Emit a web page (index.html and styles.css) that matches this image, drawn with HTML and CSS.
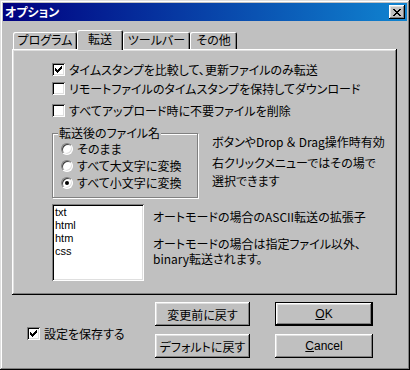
FILE: index.html
```html
<!DOCTYPE html>
<html lang="ja">
<head>
  <meta charset="UTF-8" />
  <title>オプション</title>
  <link rel="stylesheet" href="styles.css">
</head>
<body>
  <div class="window">
    <div class="titlebar">
      <span class="title">オプション</span>
      <span class="close-btn">
        <svg width="8" height="7" viewBox="0 0 8 7"><path d="M0 0h2v1h-2zM1 1h2v1h-2zM2 2h4v1h-4zM3 3h2v1h-2zM2 4h4v1h-4zM1 5h2v1h-2zM0 6h2v1h-2zM6 0h2v1h-2zM5 1h2v1h-2zM5 5h2v1h-2zM6 6h2v1h-2z" fill="#000"/></svg>
      </span>
    </div>

    <div class="dialog">
      <div class="tabs">
        <div class="tab tab-program">プログラム</div>
        <div class="tab tab-transfer active">転送</div>
        <div class="tab tab-toolbar">ツールバー</div>
        <div class="tab tab-other">その他</div>
      </div>

      <div class="panel">
        <label class="check-row row-1"><span class="checkbox checked"></span>タイムスタンプを比較して、更新ファイルのみ転送</label>
        <label class="check-row row-2"><span class="checkbox"></span>リモートファイルのタイムスタンプを保持してダウンロード</label>
        <label class="check-row row-3"><span class="checkbox"></span>すべてアップロード時に不要ファイルを削除</label>

        <div class="name-section">
          <fieldset class="groupbox">
            <legend>転送後のファイル名</legend>
            <div class="radio-row"><span class="radio"></span>そのまま</div>
            <div class="radio-row"><span class="radio"></span>すべて大文字に変換</div>
            <div class="radio-row"><span class="radio selected"></span>すべて小文字に変換</div>
          </fieldset>
          <div class="note">
            <p class="note-1">ボタンやDrop ＆ Drag操作時有効</p>
            <p class="note-2">右クリックメニューではその場で<br>選択できます</p>
          </div>
        </div>

        <div class="ascii-section">
          <div class="listbox">
            <div>txt</div>
            <div>html</div>
            <div>htm</div>
            <div>css</div>
          </div>
          <div class="ascii-note">
            <p class="ascii-1">オートモードの場合のASCII転送の拡張子</p>
            <p class="ascii-2">オートモードの場合は指定ファイル以外、<br>binary転送されます。</p>
          </div>
        </div>
      </div>

      <div class="footer">
        <label class="save-row"><span class="checkbox checked"></span>設定を保存する</label>
        <button class="btn">変更前に戻す</button>
        <button class="btn default"><u>O</u>K</button>
        <button class="btn">デフォルトに戻す</button>
        <button class="btn"><u>C</u>ancel</button>
      </div>
    </div>
  </div>
</body>
</html>
```

FILE: styles.css
```css
body {
  margin: 0;
  background: #c0c0c0;
  font-family: "Noto Sans CJK JP", sans-serif;
  font-size: 12px;
  color: #000;
}
.window {
  width: 410px;
  height: 370px;
  box-sizing: border-box;
  padding: 3px;
  background: #c0c0c0;
  box-shadow: inset -1px -1px #000, inset 1px 1px #dfdfdf, inset -2px -2px #808080, inset 2px 2px #fff;
}

/* title bar */
.titlebar {
  height: 18px;
  display: flex;
  align-items: center;
  justify-content: space-between;
  padding: 0 2px 0 2px;
  background: linear-gradient(to right, #000080, #1084d0);
}
.title {
  color: #fff;
  font-weight: bold;
  font-size: 12px;
  line-height: 18px;
  font-feature-settings: "palt";
}
.close-btn {
  width: 16px;
  height: 14px;
  display: flex;
  align-items: center;
  justify-content: center;
  background: #c0c0c0;
  box-shadow: inset -1px -1px #000, inset 1px 1px #fff, inset -2px -2px #808080, inset 2px 2px #dfdfdf;
}

/* tabs */
.dialog {
  padding: 9px 0 0 9px;
}
.tabs {
  display: flex;
  align-items: flex-end;
  height: 19px;
  padding-left: 1px;
}
.tab {
  height: 17px;
  box-sizing: border-box;
  line-height: 16px;
  text-align: center;
  border-radius: 2px 2px 0 0;
  box-shadow: inset 1px 1px #fff, inset -1px 0 #000, inset -2px 0 #808080;
  font-feature-settings: "palt";
}
.tab-program { width: 64px; }
.tab-transfer { width: 46px; }
.tab-toolbar { width: 67px; }
.tab-other { width: 47px; }
.tab.active {
  height: 20px;
  line-height: 18px;
  position: relative;
  z-index: 1;
  margin-bottom: -1px;
  background: #c0c0c0;
}

.panel {
  width: 385px;
  height: 246px;
  box-sizing: border-box;
  padding: 14px 0 0 40px;
  box-shadow: inset -1px -1px #000, inset 1px 1px #fff, inset -2px -2px #808080, inset 2px 2px #dfdfdf;
  font-feature-settings: "palt";
}

/* checkboxes */
.check-row {
  display: flex;
  align-items: center;
  height: 13px;
  line-height: 13px;
}
.row-2 { margin-top: 6px; }
.row-3 { margin-top: 9px; }
.checkbox {
  width: 13px;
  height: 13px;
  box-sizing: border-box;
  flex: none;
  margin-right: 4px;
  background: #fff;
  box-shadow: inset 1px 1px #808080, inset -1px -1px #fff, inset 2px 2px #000, inset -2px -2px #dfdfdf;
}
.checkbox.checked {
  background: #fff url("data:image/svg+xml;utf8,<svg xmlns='http://www.w3.org/2000/svg' width='13' height='13'><path d='M3 5h1v3h-1zM4 6h1v3h-1zM5 7h1v3h-1zM6 6h1v3h-1zM7 5h1v3h-1zM8 4h1v3h-1zM9 3h1v3h-1z' fill='black'/></svg>") no-repeat;
}

/* file name group */
.name-section {
  display: flex;
  margin-top: 9px;
}
.groupbox {
  width: 146px;
  height: 72px;
  box-sizing: border-box;
  margin: 0;
  padding: 0 0 0 8px;
  border: 1px solid #808080;
  box-shadow: inset 1px 1px #fff, 1px 1px #fff;
}
.groupbox legend {
  margin-left: -3px;
  padding: 0 1px;
  line-height: 14px;
  background: #c0c0c0;
}
.radio-row {
  display: flex;
  align-items: center;
  height: 17px;
}
.radio {
  width: 12px;
  height: 12px;
  box-sizing: border-box;
  flex: none;
  margin-right: 4px;
  border-radius: 50%;
  border: 1px solid;
  border-color: #808080 #fff #fff #808080;
  background: #fff;
  box-shadow: inset 1px 1px #404040, inset -1px -1px #dfdfdf;
  display: flex;
  align-items: center;
  justify-content: center;
}
.radio.selected::after {
  content: "";
  width: 4px;
  height: 4px;
  border-radius: 50%;
  background: #000;
}
.note {
  margin: 7px 0 0 14px;
}
.note p {
  margin: 0;
  line-height: 18px;
}
.note-1 { margin-bottom: 3px !important; }

/* ascii list */
.ascii-section {
  display: flex;
  margin-top: 6px;
}
.listbox {
  width: 92px;
  height: 77px;
  box-sizing: border-box;
  padding: 2px 3px;
  background: #fff;
  font-family: "Liberation Sans", sans-serif;
  font-size: 11px;
  line-height: 13px;
  box-shadow: inset 1px 1px #808080, inset -1px -1px #fff, inset 2px 2px #000, inset -2px -2px #dfdfdf;
}
.ascii-note {
  margin: 5px 0 0 9px;
}
.ascii-note p {
  margin: 0;
  line-height: 15px;
}
.ascii-2 { margin-top: 12px !important; }

/* footer */
.footer {
  display: grid;
  grid-template-columns: 118px 95px 98px;
  grid-template-rows: 24px 24px;
  column-gap: 25px;
  row-gap: 8px;
  margin-top: 7px;
  font-feature-settings: "palt";
}
.save-row {
  grid-row: 1 / 3;
  display: flex;
  align-items: center;
  padding-top: 6px;
  margin-left: 15px;
}
.btn {
  margin: 0;
  padding: 0;
  border: none;
  background: #c0c0c0;
  font-family: "Noto Sans CJK JP", sans-serif;
  font-size: 12px;
  font-feature-settings: "palt";
  color: #000;
  box-shadow: inset -1px -1px #000, inset 1px 1px #fff, inset -2px -2px #808080, inset 2px 2px #dfdfdf;
}
.btn u {
  text-underline-offset: 1px;
}
.btn.default {
  box-shadow: inset 0 0 0 1px #000, inset -2px -2px #000, inset 2px 2px #fff, inset -3px -3px #808080, inset 3px 3px #dfdfdf;
  font-family: "Liberation Sans", sans-serif;
}
.btn:last-child {
  font-family: "Liberation Sans", sans-serif;
}
```
